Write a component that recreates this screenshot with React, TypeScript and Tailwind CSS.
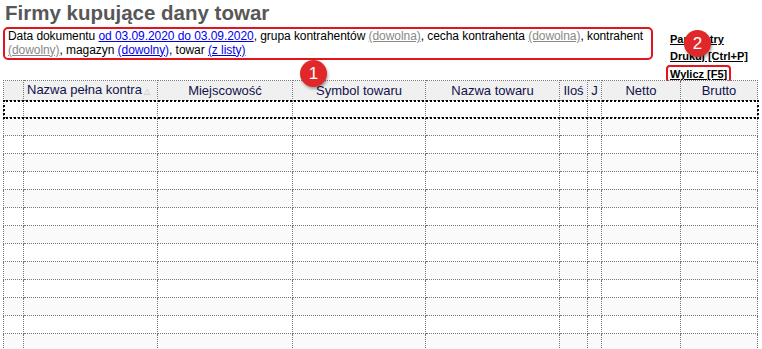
import React from 'react';

const columns = [
    { title: 'Nazwa pełna kontra', width: 134, sort: true },
    { title: 'Miejscowość', width: 135 },
    { title: 'Symbol towaru', width: 133 },
    { title: 'Nazwa towaru', width: 134 },
    { title: 'Iloś', width: 28 },
    { title: 'J', width: 14 },
    { title: 'Netto', width: 79 },
    { title: 'Brutto', width: 77 },
];

const Badge: React.FC<{ n: string; className: string }> = ({ n, className }) => (
    <div className={`absolute flex h-[27px] w-[27px] items-center justify-center rounded-full bg-[#e0282b] text-[17px] text-white shadow-[1px_2px_3px_rgba(0,0,0,0.35)] ${className}`}>
        {n}
    </div>
);

const App: React.FC = () => {
    const rows = Array.from({ length: 14 }, (_, i) => i);

    return (
        <div className="relative h-[349px] w-[762px] overflow-hidden bg-white font-['Liberation_Sans',Arial,sans-serif] text-black">
            {/* Title */}
            <h1 className="ml-[5px] pt-[1px] text-[20.5px] font-bold leading-[24px] text-[#575757]">Firmy kupujące dany towar</h1>

            <div className="flex">
                {/* Filter description */}
                <div className="ml-[3px] mt-[2px] h-[33px] w-[650px] rounded-[5px] border-2 border-[#e3151a] pl-[3px] pt-[1px] text-[12px] leading-[13.5px] tracking-[-0.06px]">
                    Data dokumentu <a className="text-[#0000ee] underline">od 03.09.2020 do 03.09.2020</a>, grupa kontrahentów{' '}
                    <a className="text-[#888] underline">(dowolna)</a>, cecha kontrahenta <a className="text-[#888] underline">(dowolna)</a>, kontrahent{' '}
                    <a className="text-[#888] underline">(dowolny)</a>, magazyn <a className="text-[#0000ee] underline">(dowolny)</a>, towar{' '}
                    <a className="text-[#0000ee] underline">(z listy)</a>
                </div>

                {/* Actions */}
                <div className="ml-[17px] mt-[6px] flex flex-col items-start text-[11px] font-bold leading-[17px]">
                    <a className="underline">Parametry</a>
                    <a className="underline">Drukuj [Ctrl+P]</a>
                    <a className="-ml-[4px] rounded-[4px] border-2 border-[#e3151a] px-[2px] leading-[14px] underline">Wylicz [F5]</a>
                </div>
            </div>

            {/* Grid */}
            <table className="absolute left-[3px] top-[80px] table-fixed border-collapse text-[13px]">
                <colgroup>
                    <col className="w-[20px]" />
                    {columns.map((c) => (
                        <col key={c.title} style={{ width: c.width }} />
                    ))}
                </colgroup>
                <thead>
                    <tr className="h-[18px] bg-[#f0f0f0] text-[#10104a]">
                        <th className="border border-dotted border-[#777]" />
                        {columns.map((c) => (
                            <th
                                key={c.title}
                                className={`overflow-hidden whitespace-nowrap border border-dotted border-[#777] px-[3px] py-0 font-normal leading-[17px] ${c.sort ? 'text-left' : 'text-center'}`}
                            >
                                {c.title}
                                {c.sort && <span className="ml-[2px] text-[8px] text-[#bbb]">△</span>}
                            </th>
                        ))}
                    </tr>
                </thead>
                <tbody>
                    {rows.map((r) => (
                        <tr
                            key={r}
                            className={`${r === 0 ? 'h-[17px] outline-dotted outline-2 -outline-offset-1 outline-black' : 'h-[18px]'} ${r % 2 === 1 ? 'bg-[#fafafa]' : 'bg-white'}`}
                        >
                            <td className="border border-dotted border-[#777]" />
                            {columns.map((c) => (
                                <td key={c.title} className="border border-dotted border-[#777]" />
                            ))}
                        </tr>
                    ))}
                </tbody>
            </table>

            <Badge n="1" className="left-[300px] top-[60px]" />
            <Badge n="2" className="left-[684px] top-[30px]" />
        </div>
    );
};

export default App;
